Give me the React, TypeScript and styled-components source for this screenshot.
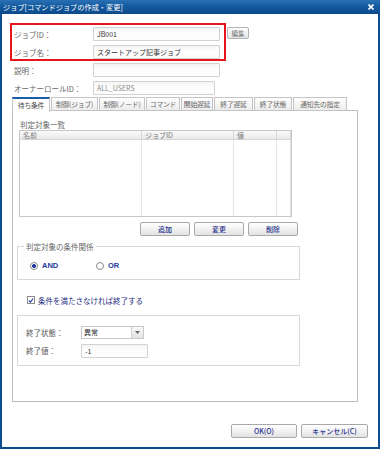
import styled, { createGlobalStyle } from 'styled-components';

const GlobalStyle = createGlobalStyle`
  html, body {
    margin: 0;
    padding: 0;
    background: #ffffff;
  }
  body {
    font-family: "Noto Sans CJK JP", "Noto Sans", sans-serif;
    font-size: 7.5px;
    color: #555;
  }
  * {
    box-sizing: border-box;
  }
`;

const Dialog = styled.div`
  width: 380px;
  height: 449px;
  display: flex;
  flex-direction: column;
  border: 2px solid #0d4d8f;
  border-top: none;
  background: #fff;
`;

const TitleBar = styled.div`
  height: 14px;
  margin: 0 -2px;
  padding: 0 6px 0 3px;
  display: flex;
  align-items: center;
  justify-content: space-between;
  background: linear-gradient(#2a70b6 0%, #145a9e 45%, #0a4a8c 100%);
  color: #fff;
  font-size: 7.2px;
  line-height: 14px;
`;

const CloseIcon = styled.svg`
  width: 6px;
  height: 6px;
`;

const Form = styled.div`
  position: relative;
  padding: 13px 0 0 12px;
  display: flex;
  flex-direction: column;
  gap: 4px;
`;

const Highlight = styled.div`
  position: absolute;
  left: 8px;
  top: 9px;
  width: 216px;
  height: 38px;
  border: 2px solid #e8141c;
  pointer-events: none;
`;

const Row = styled.div`
  display: flex;
  align-items: center;
  height: 14px;
`;

const Label = styled.span`
  width: 79px;
  color: #666;
  white-space: nowrap;
`;

const Input = styled.div<{ $w: number; $muted?: boolean }>`
  width: ${({ $w }) => $w}px;
  height: 14px;
  border: 1px solid #d2d2d2;
  border-radius: 1px;
  background: linear-gradient(#f4f4f4, #fdfdfd 40%);
  color: ${({ $muted }) => ($muted ? '#8a8a8a' : '#333')};
  font-size: 7px;
  line-height: 12px;
  padding: 0 3px;
  white-space: nowrap;
  overflow: hidden;
`;

const SmallButton = styled.div`
  margin-left: 7px;
  height: 12px;
  width: 22px;
  border: 1px solid #b4b4b4;
  border-radius: 2px;
  background: linear-gradient(#fdfdfd, #e6e6e6);
  color: #777;
  font-size: 6.5px;
  line-height: 10px;
  text-align: center;
  align-self: flex-start;
`;

const TabRow = styled.div`
  display: flex;
  gap: 1px;
  margin: 2px 0 0 10px;
  height: 14px;
  position: relative;
  z-index: 1;
`;

const Tab = styled.div<{ $w: number; $active?: boolean }>`
  width: ${({ $w }) => $w}px;
  height: ${({ $active }) => ($active ? 15 : 14)}px;
  border: 1px solid #c4c4c4;
  border-top: ${({ $active }) => ($active ? '2px solid #1a5ea6' : '1px solid #c4c4c4')};
  border-bottom: ${({ $active }) => ($active ? 'none' : '1px solid #c4c4c4')};
  background: ${({ $active }) => ($active ? '#fff' : 'linear-gradient(#ffffff, #ececec)')};
  color: ${({ $active }) => ($active ? '#444' : '#666')};
  font-size: 6.8px;
  letter-spacing: -0.2px;
  text-align: center;
  line-height: 12px;
  white-space: nowrap;
  overflow: hidden;
`;

const Panel = styled.div`
  margin: -1px 20px 0 10px;
  height: 292px;
  border: 1px solid #bdbdbd;
  display: flex;
  flex-direction: column;
  align-items: flex-start;
  padding-left: 4px;
`;

const Heading = styled.div`
  margin: 9px 0 0 3px;
  height: 10px;
  line-height: 10px;
  color: #666;
`;

const Table = styled.div`
  margin-left: 2px;
  width: 273px;
  height: 87px;
  border: 1px solid #c8c8c8;
  display: grid;
  grid-template-columns: 122px 92px 43px 1fr;
  grid-template-rows: 9px 1fr;
`;

const HeadCell = styled.div`
  background: linear-gradient(#fafafa, #e9e9e9);
  border-right: 1px solid #d8d8d8;
  border-bottom: 1px solid #d4d4d4;
  color: #777;
  font-size: 7px;
  line-height: 8px;
  padding-left: 3px;
  white-space: nowrap;
`;

const BodyCell = styled.div`
  border-right: 1px solid #e4e4e4;
`;

const ButtonRow = styled.div`
  margin: 5px 0 0 123px;
  display: flex;
  gap: 4px;
`;

const ActionButton = styled.div<{ $w: number }>`
  width: ${({ $w }) => $w}px;
  height: 14px;
  border: 1px solid #a9a9a9;
  border-radius: 2px;
  background: linear-gradient(#ffffff, #f2f2f2 50%, #e2e2e2);
  color: #1f2f8c;
  font-size: 7px;
  font-weight: 500;
  line-height: 12px;
  text-align: center;
`;

const GroupBox = styled.div<{ $h: number; $mt: number }>`
  position: relative;
  margin-top: ${({ $mt }) => $mt}px;
  width: 283px;
  height: ${({ $h }) => $h}px;
  border: 1px solid #d8d8d8;
  padding: 0 8px;
`;

const Legend = styled.span`
  position: absolute;
  top: -5px;
  left: 6px;
  padding: 0 2px;
  background: #fff;
  color: #666;
  line-height: 9px;
`;

const RadioRow = styled.div`
  display: flex;
  align-items: center;
  margin-top: 14px;
  padding-left: 4px;
`;

const Radio = styled.label<{ $w: number }>`
  display: flex;
  align-items: center;
  gap: 4px;
  width: ${({ $w }) => $w}px;
  color: #1d3a9a;
  font-family: "Liberation Sans", Arial, sans-serif;
  font-size: 7.5px;
  font-weight: 700;
`;

const RadioDot = styled.span<{ $on?: boolean }>`
  width: 8px;
  height: 8px;
  border-radius: 50%;
  border: 1px solid #8a8a8a;
  background: radial-gradient(
    circle,
    ${({ $on }) => ($on ? '#1d3a9a 0 1.8px, #fff 2.2px' : '#fff 0')}
  );
`;

const CheckRow = styled.div`
  margin: 15px 0 0 10px;
  display: flex;
  align-items: center;
  gap: 3px;
  height: 10px;
  color: #1d2a80;
`;

const CheckBox = styled.span`
  width: 8px;
  height: 8px;
  border: 1px solid #8c8c8c;
  background: #fff;
  display: flex;
  align-items: center;
  justify-content: center;
`;

const FieldRow = styled.div<{ $mt: number }>`
  display: flex;
  align-items: center;
  margin-top: ${({ $mt }) => $mt}px;
  height: 13px;
`;

const FieldLabel = styled.span`
  width: 55px;
  color: #555;
`;

const Select = styled.div`
  width: 63px;
  height: 13px;
  border: 1px solid #c8c8c8;
  display: flex;
  background: #fff;
`;

const SelectText = styled.span`
  flex: 1;
  padding-left: 2px;
  color: #333;
  font-size: 7px;
  line-height: 11px;
`;

const SelectArrow = styled.span`
  width: 12px;
  border-left: 1px solid #d0d0d0;
  background: linear-gradient(#fafafa, #e2e2e2);
  display: flex;
  align-items: center;
  justify-content: center;
`;

const Footer = styled.div`
  display: flex;
  justify-content: flex-end;
  gap: 4px;
  margin: 22px 10px 0 0;
`;

const tabs: [string, number][] = [
  ['待ち条件', 38],
  ['制御(ジョブ)', 47],
  ['制御(ノード)', 46],
  ['コマンド', 34],
  ['開始遅延', 32],
  ['終了遅延', 39],
  ['終了状態', 38],
  ['通知先の指定', 54],
];

export default function App() {
  return (
    <>
      <GlobalStyle />
      <Dialog>
        <TitleBar>
          <span>ジョブ[コマンドジョブの作成・変更]</span>
          <CloseIcon viewBox="0 0 6 6">
            <path d="M0.5 0.5 L5.5 5.5 M5.5 0.5 L0.5 5.5" stroke="#fff" strokeWidth="1.6" />
          </CloseIcon>
        </TitleBar>

        <Form>
          <Row>
            <Label>ジョブID：</Label>
            <Input $w={127}>JB001</Input>
            <SmallButton>編集</SmallButton>
          </Row>
          <Row>
            <Label>ジョブ名：</Label>
            <Input $w={127}>スタートアップ記事ジョブ</Input>
          </Row>
          <Row>
            <Label>説明：</Label>
            <Input $w={127} />
          </Row>
          <Row>
            <Label>オーナーロールID：</Label>
            <Input $w={122} $muted>
              ALL_USERS
            </Input>
          </Row>
          <Highlight />
        </Form>

        <TabRow>
          {tabs.map(([name, w], i) => (
            <Tab key={name} $w={w} $active={i === 0}>
              {name}
            </Tab>
          ))}
        </TabRow>

        <Panel>
          <Heading>判定対象一覧</Heading>
          <Table>
            <HeadCell>名前</HeadCell>
            <HeadCell>ジョブID</HeadCell>
            <HeadCell>値</HeadCell>
            <HeadCell />
            <BodyCell />
            <BodyCell />
            <BodyCell />
            <BodyCell />
          </Table>
          <ButtonRow>
            <ActionButton $w={50}>追加</ActionButton>
            <ActionButton $w={50}>変更</ActionButton>
            <ActionButton $w={50}>削除</ActionButton>
          </ButtonRow>

          <GroupBox $h={34} $mt={10}>
            <Legend>判定対象の条件関係</Legend>
            <RadioRow>
              <Radio $w={66}>
                <RadioDot $on />
                AND
              </Radio>
              <Radio $w={40}>
                <RadioDot />
                OR
              </Radio>
            </RadioRow>
          </GroupBox>

          <CheckRow>
            <CheckBox>
              <svg width="7" height="7" viewBox="0 0 7 7">
                <path d="M1 3.6 L2.8 5.4 L6 1.2" fill="none" stroke="#1d3a9a" strokeWidth="1.3" />
              </svg>
            </CheckBox>
            条件を満たさなければ終了する
          </CheckRow>

          <GroupBox $h={51} $mt={10}>
            <FieldRow $mt={10}>
              <FieldLabel>終了状態：</FieldLabel>
              <Select>
                <SelectText>異常</SelectText>
                <SelectArrow>
                  <svg width="5" height="3" viewBox="0 0 5 3">
                    <path d="M0 0 L5 0 L2.5 3 Z" fill="#666" />
                  </svg>
                </SelectArrow>
              </Select>
            </FieldRow>
            <FieldRow $mt={5}>
              <FieldLabel>終了値：</FieldLabel>
              <Input $w={67}>-1</Input>
            </FieldRow>
          </GroupBox>
        </Panel>

        <Footer>
          <ActionButton $w={66}>OK(O)</ActionButton>
          <ActionButton $w={67}>キャンセル(C)</ActionButton>
        </Footer>
      </Dialog>
    </>
  );
}
